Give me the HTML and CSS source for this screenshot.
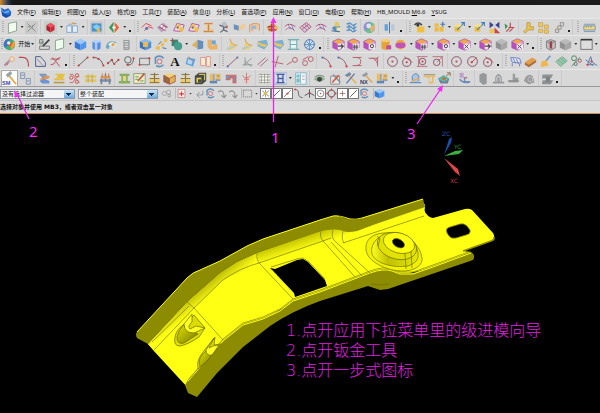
FILE: index.html
```html
<!DOCTYPE html>
<html lang="zh-CN">
<head>
<meta charset="utf-8">
<title>NX</title>
<link rel="stylesheet" href="styles.css">
</head>
<body>
<header class="titlebar"></header>
<nav class="menubar">
  <svg class="app-logo" viewBox="0 0 16 16"><path d="M1 2l5 3 5-2 4 5-1 5-6 3-5-3-1-5z" fill="#164fae"/><path d="M5 6l6-2 4 4-4 4-5-2z" fill="#2a7ce0"/><path d="M1 3l4 6M6 9l6-2" stroke="#b8dcff" fill="none"/></svg>
  <a href="#">文件(<u>F</u>)</a><a href="#">编辑(<u>E</u>)</a><a href="#">视图(<u>V</u>)</a><a href="#">插入(<u>S</u>)</a><a href="#">格式(<u>R</u>)</a><a href="#">工具(<u>T</u>)</a><a href="#">装配(<u>A</u>)</a><a href="#">信息(<u>I</u>)</a><a href="#">分析(<u>L</u>)</a><a href="#">首选项(<u>P</u>)</a><a href="#">应用(<u>N</u>)</a><a href="#">窗口(<u>O</u>)</a><a href="#">电极(<u>D</u>)</a><a href="#">帮助(<u>H</u>)</a><a href="#">HB_MOULD <u>M</u>6.6</a><a href="#"><u>Y</u>SUG</a>
</nav>
<div class="toolbars" id="toolbars"></div>
<div class="selection">
  <select class="filter" aria-label="类型过滤器"><option>没有选择过滤器</option></select>
  <select class="scope" aria-label="选择范围"><option>整个装配</option></select>
  <div class="snap" id="snap"></div>
</div>
<p class="status">选择对象并使用 MB3，或者双击某一对象</p>
<main class="viewport">
  <svg class="model" viewBox="0 114 600 299" preserveAspectRatio="xMidYMin meet">
    <defs>
      <linearGradient id="bend" gradientUnits="userSpaceOnUse" x1="200" y1="282" x2="212" y2="297"><stop offset="0" stop-color="#a5a500"/><stop offset="1" stop-color="#ffff16"/></linearGradient>
      <linearGradient id="bend2" gradientUnits="userSpaceOnUse" x1="320" y1="231" x2="324" y2="243"><stop offset="0" stop-color="#c4c400"/><stop offset="1" stop-color="#ffff16"/></linearGradient>
      <linearGradient id="cone" x1="0" y1="0" x2="1" y2="0"><stop offset="0" stop-color="#ffff20"/><stop offset=".35" stop-color="#c0c000"/><stop offset="1" stop-color="#e8e800"/></linearGradient>
      <linearGradient id="scoop" x1="0" y1="0" x2="1" y2="1"><stop offset="0" stop-color="#e4e400"/><stop offset="1" stop-color="#777700"/></linearGradient>
    </defs>
    <path fill="#ffff13" d="M148 344L187 302 220 273 237 262 257 253 320 231 425 204 424 210Q427 217 433 218L465 209Q469 208 472 210L493 233Q496 238 491 241L463 251 471 252 433 268 400 275 370 275 320 293 293 302 263 320 243 326 223 343 188 388 153 350Z"/>
    <path fill="url(#bend)" d="M148 344L187 302 220 273 237 262 257 253 259 263 223 280 194 308 154 350Z"/>
    <path fill="url(#bend2)" d="M257 253L322 231 337 229 343 231 357 231 425 206 424 216 343 243 331 239 259 263Z"/>
    <path fill="#8d8c00" d="M137 332L187 278Q193 272 200 270L220 261 247 246 263 239 320 220 333 216Q338 215 350 219 356 220 362 218L423 199 425 207 373 225 357 231Q347 233 343 231 337 228 322 231L257 253 237 262 220 273 187 302 148 344 137 338Q135 334 137 332Z"/>
    <path fill="#8d8c00" d="M188 380L223 340 243 324 263 318 280 310 293 300 320 291 370 272Q384 267 392 270L400 273 413 273 433 266 471 252Q476 255 473 260L388 289 380 290 368 286 320 301Q292 311 270 326L243 347 217 373 197 397 188 393 185 385Z"/>
    <path fill="none" stroke="#ffff18" d="M137 332L187 278Q193 272 200 270L220 261 247 246 263 239 320 220 333 216Q338 215 350 219 356 220 362 218L423 199M188 381L223 341 243 325 263 319 280 311 293 301 320 292 370 273Q384 268 392 271L400 274 413 274 433 267 471 253"/>
    <g fill="none" stroke="#686800" stroke-width=".6">
      <path d="M154 350L194 308 223 280 Q240 268 259 263L320 242 331 238M343 243L424 216M187 302L194 308 223 340M257 253Q256 260 260 264L293 299M321 231Q319 237 324 242L355 277M333 230Q330 238 337 243L370 273M343 231Q341 239 344 243M331 242L362 276M339 216L350 220 362 219M152 342L189 306M188 380L223 339 243 323 263 317 280 309 293 299 320 290 370 271Q384 266 392 269L400 272 413 272 433 265 471 251M371 284Q379 286 389 284"/>
    </g>
    <path fill="#000" d="M270 268L275 269 297 260 303 259 308 262 325 280 327 286 295 297 294 293 273 271Z"/>
    <path fill="none" stroke="#d9d900" stroke-dasharray="1 1" d="M272 270L294 294"/>
    <path fill="none" stroke="#777700" stroke-width=".7" d="M271 267L297 259 303 258 309 262 325 279"/>
    <g stroke="#676700" stroke-width=".65">
      <path fill="#f1f100" d="M389 233C374 232 365 239 366 249 366 261 387 272 405 271 417 270 423 264 422 258 420 246 412 238 398 234Z"/>
      <path fill="url(#cone)" d="M378 238Q370 245 372 254C376 264 393 268 408 266Q420 262 418 253C416 238 400 231 390 233Z"/>
      <ellipse cx="397" cy="246" rx="20" ry="13" transform="rotate(16 397 246)" fill="#e2e200"/>
      <ellipse cx="399" cy="243" rx="16" ry="10" transform="rotate(16 399 243)" fill="#ffff12"/>
      <ellipse cx="398.500" cy="243" rx="6.500" ry="4" transform="rotate(28 398 243)" fill="#000"/>
      <path fill="none" d="M377 236L380 239 378 246M405 253L406 269M411 251L412 268"/>
    </g>
    <path fill="#000" stroke="#8d8c00" stroke-width=".8" d="M447 233Q445 228 450 227L460 224Q464 223 467 226L470 230Q471 234 466 235L456 238Q451 239 449 236Z"/>
    <path d="M494 237Q495 240 491 241L463 251" fill="none" stroke="#8c8c00" stroke-width="1.500"/>
    <g stroke="#626200" stroke-width=".65">
      <path fill="#dcdc00" d="M175 337Q173 346 180 346 187 345 199 337L205 328 194 315 187 322Q176 329 175 337Z"/>
      <path fill="url(#scoop)" d="M177 337Q177 345 184 343L198 334 194 332Q184 331 184 324 178 331 177 337Z"/>
      <path fill="#ffff24" d="M184 324Q184 333 194 333L205 328 196 326 190 329Q187 326 192 322L192 314Z"/>
      <path fill="#dcdc00" d="M198 368Q196 361 203 352L215 337 214 345 221 344 208 360 198 369Z"/>
      <path fill="url(#scoop)" d="M200 367Q197 358 206 351L212 354 208 360Z"/>
      <path fill="#ffff24" d="M206 350Q206 356 212 355L219 345 213 346 209 348 214 338Z"/>
    </g>
    <path fill="#174ea6" d="M444 155L449 139 452 137 451 143Z"/><path fill="#3bb143" d="M444 156L455 151 463 150 459 154Z"/><path fill="#df4646" d="M444 158L458 169 460 176 455 172Z"/>
    <g class="axis"><text x="442" y="136" fill="#2454b4">ZC</text><text x="454" y="149" fill="#328b38">YC</text><text x="450" y="183" fill="#bd3636">XC</text></g>
  </svg>
  <ol class="notes">
    <li>1.点开应用下拉菜单里的级进模向导</li>
    <li>2.点开钣金工具</li>
    <li>3.点开一步式图标</li>
  </ol>
</main>
<svg class="callouts" viewBox="0 0 600 413" preserveAspectRatio="xMidYMin meet">
  <path d="M273.500 22V122M18 96L29 119M440 90L417 124" fill="none" stroke="#e826e8" stroke-width="1.300"/>
  <path d="M273.500 17l3 6h-6zM14 90l5 5-4 3zM443 85l-1 7-5-3z" fill="#f52cf5"/>
  <text x="271" y="143">1</text><text x="29" y="137">2</text><text x="407" y="139">3</text>
</svg>
<script src="toolbars.js"></script>
</body>
</html>
```
FILE: styles.css
```css
* { box-sizing: border-box; }
body {
  margin: 0;
  min-height: 100vh;
  display: flex;
  flex-direction: column;
  background: #000;
  color: #111;
  font: 6px/8px "Liberation Sans", "Noto Sans CJK SC", sans-serif;
  position: relative;
  overflow-x: hidden;
}
.titlebar { height: 5px; background: linear-gradient(90deg, #d48a24 0, #263c58 8px, #171717 12px, #1c1c1c); }
.menubar {
  display: flex;
  align-items: center;
  gap: 6px;
  height: 13px;
  background: #dfdfdf;
  font-family: "Noto Sans", "Noto Sans CJK SC", sans-serif;
  white-space: nowrap;
}
.menubar a { color: #111; text-decoration: none; }
.app-logo { width: 12px; height: 12px; margin-right: -1px; }
.toolbars { background: #d8d8d8; border-bottom: 1px solid #999; }
.bar { display: flex; height: 17px; border-top: 1px solid #e8e8e8; }
.group {
  display: flex;
  align-items: center;
  justify-content: space-evenly;
  min-width: 0;
  border-right: 1px solid #cacaca;
}
.group:last-child { border-right: 0; }
button {
  display: block;
  padding: 0;
  border: 0;
  background: none;
  width: 13px;
  height: 13px;
  flex: none;
  font: inherit;
  color: inherit;
}
button svg { display: block; width: 100%; height: 100%; opacity: .88; }
.icon-text { font: bold 13px/13px "Liberation Serif", serif; }
.pressed { width: 15px; height: 15px; background: #fff; outline: 1px solid #aaa; }
.start { width: auto; display: flex; align-items: center; gap: 2px; }
.start svg { width: 13px; height: 13px; opacity: 1; }
.drop { width: 3px; height: 2px; flex: none; background: #333; clip-path: polygon(0 0, 100% 0, 50% 100%); }
.more { width: 2px; height: 2px; flex: none; margin-top: 8px; background: #222; }
.grip { width: 2px; height: 12px; flex: none; background: repeating-linear-gradient(#b2b2b2 0 1px, transparent 1px 2px); }
.selection { display: flex; align-items: center; gap: 3px; height: 13px; background: #d8d8d8; }
select {
  appearance: none;
  height: 10px;
  border: 1px solid #8d9aab;
  border-radius: 0;
  padding: 0 12px 0 1px;
  color: #111;
  font: 6px/8px "Noto Sans CJK SC", sans-serif;
  background:
    linear-gradient(#112b4c, #112b4c) right 3px top 3px / 5px 1px no-repeat,
    linear-gradient(#112b4c, #112b4c) right 4px top 4px / 3px 1px no-repeat,
    linear-gradient(#112b4c, #112b4c) right 5px top 5px / 1px 1px no-repeat,
    linear-gradient(#cbe6fa, #6fa8dc) right / 10px 100% no-repeat,
    #f5f5f5;
}
.filter { width: 75px; }
.scope { width: 80px; }
.snap { display: flex; align-items: center; }
.snap button { width: 11px; height: 11px; }
.snap .drop { margin: 0 2px; }
.snap .boxed { background: #fff; border: 1px solid #777; }
.gap { width: 4px; height: 11px; border-right: 1px solid #bbb; }
.status {
  margin: 0;
  height: 14px;
  padding-top: 2px;
  background: #dcdcdc;
  border-top: 1px solid #c6c6c6;
  border-bottom: 1px solid #c98c58;
  font-family: "DejaVu Sans", "Noto Sans CJK SC", sans-serif;
  font-weight: bold;
}
.viewport { position: relative; flex: 1; }
.model { display: block; width: 100%; }
.axis { font: 6px "DejaVu Sans", sans-serif; }
.notes {
  position: absolute;
  left: 286px;
  top: 207px;
  margin: 0;
  padding: 0;
  list-style: none;
  color: #e41fe4;
  font: 300 16px/20px "DejaVu Sans", "Noto Sans CJK SC", sans-serif;
  white-space: nowrap;
}
.callouts { position: absolute; top: 0; left: 0; width: 100%; pointer-events: none; }
.callouts text { fill: #f52cf5; font: 15px "Noto Sans", sans-serif; }
```
FILE: toolbars.js
```js
// Icon drawings, each on a 16 x 16 grid.
const line = (d, c = '#a5343c', w = 1.2) => `<path d="${d}" fill="none" stroke="${c}" stroke-width="${w}"/>`;
const fill = (d, c) => `<path d="${d}" fill="${c}"/>`;
const dot = (x, y, c = '#c22', r = 1.3) => `<circle cx="${x}" cy="${y}" r="${r}" fill="${c}"/>`;
const cube = (a, b, c) => fill('M1 4l7-3 7 3-7 4z', a) + fill('M1 4l7 4v7l-7-3z', b) + fill('M15 4l-7 4v7l7-3z', c);
const ring = (x, y, r, c = '#87405e') => `<circle cx="${x}" cy="${y}" r="${r}" fill="none" stroke="${c}" stroke-width="1.2"/>`;
const pinkCube = cube('#f4a03a', '#b93bc0', '#e58ae0') + line('M1 4l7-3 7 3v8l-7 3-7-3zM8 8v7', '#a03aa0', .8) + fill('M7 7h8v7H7z', '#f4ecf4');
const sheet = (c) => fill('M1 8l8-6 6 5-8 7z', c);

const icons = {
  plane: fill('M3 3l10-2v11l-10 3z', '#f4fff1') + line('M3 3l10-2v11l-10 3z', '#6f9275', 1),
  cut: '<path d="M0 0h16v16H0z" fill="#cacaca"/>' + line('M3 3l10 10M13 3L3 13M3 7h4M9 5v4', '#777', 1),
  redcube: '<path d="M0 0h16v16H0z" fill="#c5cfc9"/>' + fill('M3 5l5-3 5 3-5 3z', '#ef4050') + fill('M3 5l5 3v6l-5-3z', '#a80818') + fill('M13 5l-5 3v6l5-3z', '#d01022'),
  assy: fill('M1 6h6v8H1zM8 6h6v8H8z', '#e4f1fb') + line('M1 6h6v8H1zM8 6h6v8H8zM3 4h4M9 3h4', '#6b9ac4', 1) + fill('M7 2h4v2H7z', '#e99635'),
  views: '<path d="M0 0h16v16H0z" fill="#c4ccd2"/>' + fill('M2 3h12v10H2z', '#3887c6') + fill('M3 7l5-3 5 3-4 5z', '#79cbf0') + fill('M9 9h3v5H9z', '#f1b928'),
  cycle: fill('M8 0l7 8-7 8-7-8z', '#f0f0ed') + fill('M1 8l6-7v4L5 8l2 3v4z', '#22934a') + fill('M8 1l6 7-6 7v-5l2-2-2-2z', '#e8572c'),
  strip: fill('M1 7l5-4 9 2-4 8z', '#f0d0d2') + line('M1 8l5-5 7 3M4 12l5-5 6 2', '#c4454c') + dot(7, 9, '#4b71bc', 2),
  blank: sheet('#b896bd') + line('M3 7l9 5M6 4l8 4', '#b43d56') + dot(7, 6, '#fff') + dot(10, 9, '#fff'),
  nest: fill('M1 12l4-9 10 2-3 9z', '#f0d9ea') + line('M2 12l4-9 9 2-3 8z', '#ab49a0') + fill('M4 7l4-4 3 3-4 4zM8 11l3-4 4 3-4 4z', '#f0bf35') + dot(7, 8, '#51519d'),
  zbend: fill('M3 2h10v3h-3v5h4v4H2v-3h4V5H3z', '#f2bd68') + line('M3 3h10M8 4v8M2 13h12', '#c2673d', 1),
  robot: dot(9, 4, '#b4bcc8', 3) + line('M8 7v4l-4 3M8 9l5-3M8 11l5 2M3 5l5 2', '#505c66', 1.5) + dot(12, 8, '#d95947'),
  flange: fill('M1 4l7 2v6l-7-2z', '#5888c0') + fill('M7 6l8-3v6l-8 3z', '#f2cb8b'),
  curve: fill('M2 5q5-4 11-2v9q-2-4-4-1l-5 3z', '#f0c39a') + fill('M4 7q4-3 6 0v3q-3-2-6 2z', '#8cb4d9') + line('M2 14V5q5-4 12-1v8', '#d58a49', 1),
  diewiz: fill('M1 8l7-6 7 6-4 5H4z', '#ec8b28') + line('M2 7h11M3 11h10M7 3v10', '#a22e29', 1.5) + dot(12, 8, '#e7ce2d', 2),
  band: fill('M1 7q5-6 13 0l-2 5q-5-5-9 0z', '#e0e5f6') + line('M1 7q5-6 13 0M2 11q5-6 11 1', '#c33e51') + line('M5 4l3 6M9 4l3 7', '#5867a4', 1),
  grid: sheet('#c9cdea') + line('M1 8l8-6 6 5-8 7zM4 6l6 5M7 4l6 5M4 10l8-6', '#b63558', 1),
  tool: fill('M2 9l6-5 5 3-6 6z', '#4e83b9') + fill('M6 1h5v6H6z', '#e5c653') + fill('M8 8h5v4H8z', '#f3e7a4') + line('M2 12l10 1', '#31619a', 1.5),
  spring: line('M2 4q4-3 6 0t6-1M2 8q4-3 6 0t6-1M2 12q4-3 6 0t6-1M5 4v8M11 4v8', '#4186c0', 1.5),
  globe: '<circle cx="8" cy="8" r="7" fill="#3dac75"/>' + fill('M8 1A7 7 0 0 0 2 12l6-4z', '#3c77cb') + fill('M8 8l6-4q3 6-4 10z', '#e9a32a') + fill('M2 2l4 6 6-3-3 6z', '#e8503a') + dot(7, 6, '#eef4f8', 2),
  sphere: '<circle cx="8" cy="8" r="7" fill="#58bd89"/>' + fill('M8 1A7 7 0 0 0 2 12l6-4z', '#8f82d6') + fill('M8 8l6-4q3 6-4 10z', '#e9aa6a') + dot(7, 6, '#dce9f4', 3),
  mirror: line('M8 1v14', '#46648d') + fill('M2 4h4v8H2z', '#5298d8') + fill('M10 4h4v8h-4z', '#b5c5d9'),
  eye: fill('M5 7h9v7H5z', '#f4bc29') + line('M2 5q4-5 9 0', '#343434', 2) + dot(6, 5, '#222', 2),
  add: fill('M2 8h5v5H2zM8 7h5v6H8zM2 3h5v4H2z', '#f1b724') + line('M12 1v6M9 4h6', '#356fba', 1.5),
  move: fill('M2 7h7v6H2z', '#f1bb25') + line('M5 11l9-9M10 2h4v4', '#2770c0', 1.3) + fill('M2 7l2-3h7L9 7z', '#ffe071'),
  mate: fill('M2 1l5 4-5 4zM14 1L9 5l5 4z', '#252a88') + fill('M2 10h5v5H2z', '#f3c32e') + fill('M8 8l7 7H8z', '#c93334'),
  constrain: fill('M2 3l4 3-3 4z', '#248a41') + line('M9 2v6M7 8h7M4 13l4-4M8 13l4-4', '#b92e3b', 1.4),
  keys: fill('M6 2h4v5h4v4H8l-4 4-2-2 4-4z', '#efc13b') + line('M6 2h4v5h4v4H8l-4 4-2-2 4-4z', '#a98226', .8),
  comp: fill('M2 2h5v5H2zM9 5h5v4H9zM2 10h5v4H2zM9 11h5v4H9z', '#f3c949') + line('M2 2h5v5H2zM9 5h5v4H9zM2 10h5v4H2zM9 11h5v4H9z', '#c08a2a', .7),
  chain: line('M3 10h4v4H3zM6 6h4v4H6zM9 2h4v4H9z', '#868b8d', 1.2) + dot(6, 9, '#dca736'),
  ruler: fill('M1 6h14v5H1z', '#f5da71') + line('M1 6h14v5H1zM4 6v2M7 6v2M10 6v2M1 13h14M1 4h14', '#426caa', .8),
  sketch: line('M2 2h4v5H2zM2 10h12v4H2z', '#717171') + line('M6 10L14 2', '#303030', 2) + line('M3 5h4', '#348b52'),
  box: cube('#94c6ff', '#246cd2', '#3d8df2'),
  cyl: fill('M3 4v9q5 4 10 0V4z', '#4283e7') + fill('M6 4h3v11H6z', '#a8c9ff') + '<ellipse cx="8" cy="4" rx="5" ry="2" fill="#aed0ff"/>',
  sweep: fill('M1 12q1-11 13-7l-3 5q-5-3-7 4z', '#5ba5c5') + fill('M4 8q5-6 10 0l-3 4q-2-4-5-2z', '#f2f5df') + dot(10, 8, '#e69d35', 2),
  thread: line('M5 3h6M4 6h8M4 9h8M4 12h8M5 14h6M5 2v12M11 2v12', '#8d9396', 1.3),
  feature: cube('#80b8ef', '#2468b9', '#3987da') + fill('M5 5h6v6H5z', '#f2b443'),
  pattern: fill('M1 10h5v4H1zM7 6h4v4H7zM11 1h4v4h-4z', '#edbb34') + line('M4 8l4-4M9 12l5 1', '#37679a'),
  unite: fill('M2 2h8v8H2z', '#247a69') + dot(10, 10, '#329681', 5) + line('M0 3h5M3 0v5', '#8e392d', 1),
  trim: fill('M1 9l7-7v11z', '#e5ab42') + fill('M8 2l7 2v9l-7 1z', '#5384bb'),
  blend: fill('M2 2h5v8l7-3v7H5l-3-3z', '#efad53') + fill('M7 3h5v5H7z', '#5c9dde'),
  surf: fill('M6 1q3 8 9 8-2 6-13 6 6-5 4-14z', '#f8cc55') + fill('M2 12q6-1 12-4-3 5-11 6z', '#a3c9e2') + line('M6 1q2 8 9 8', '#d58a38', 1),
  surf2: fill('M2 4l11-2 2 6-5 6-8-4z', '#6fabd5') + fill('M2 4q5 4 12 4l-3 3q-6-1-9-4z', '#efc449'),
  mesh: fill('M4 4h8v8H4z', '#e8fbfa') + line('M1 2h14M1 14h14M4 2v12M12 2v12M4 8h8', '#64aeb1', 1.3),
  ball: '<circle cx="8" cy="8" r="6" fill="#c9def2"/>' + ring(8, 8, 6, '#3267a8') + line('M8 1v14M1 8h14M4 4l8 8M12 4l-8 8', '#4778aa', .9),
  pinkArrow: pinkCube + line('M7 10h7M11 8l3 2-3 3', '#333', 1.3),
  pinkGrid: pinkCube + line('M9 8v6M12 8v6M7 10h7M7 12h7', '#343434', 1),
  pinkHole: pinkCube + ring(11, 10, 2, '#333'),
  pinkMove: pinkCube + line('M8 8l5 5M13 8l-5 5', '#444', 1.2),
  orangeCyl: fill('M3 3v10q5 3 10 0V3z', '#e89c27') + '<ellipse cx="8" cy="3" rx="5" ry="2" fill="#f8cc65"/>' + fill('M9 9h6v5H9z', '#bd3c95'),
  pill: '<circle cx="8" cy="8" r="6" fill="#efa131"/>' + fill('M2 7q6-3 12 0v4q-6 3-12 0z', '#c040b0'),
  graycube: cube('#b8b8b8', '#898989', '#a0a0a0'),
  wirebox: fill('M3 4l5-2 6 2v8l-6 3-5-3z', '#bbb') + line('M3 4l5-2 6 2v8l-6 3-5-3zM3 4l5 3 6-3', '#686868', 1) + fill('M7 4h3v9H7z', '#a32838'),
  screen: '<path d="M1 2h14v12H1z" fill="#dedede" stroke="#555"/>' + line('M1 2h14', '#222', 2),
  key: line('M2 13l8-8', '#a28aae', 3) + fill('M8 1h6v7H8z', '#f4dfc5') + ring(11, 5, 3, '#dca86d') + dot(5, 11, '#db6a4a'),
  fillet: line('M1 3h5q7 0 7 11', '#ba3940', 1.5),
  chamfer: line('M2 2v12h12V9L8 2H2z', '#3d4e83') + line('M4 5l7 8', '#8d7bb3'),
  offset: line('M2 12q5 0 6-4t6-5M2 5h11M4 3q5 5 9 11', '#b3434b'),
  line: line('M2 13L13 3', '#555') + dot(2, 13) + dot(13, 3),
  arc: line('M2 3q9 0 12 10', '#555') + dot(2, 3) + dot(8, 5) + dot(14, 13),
  spline: line('M1 10q4-2 5-5 2 8 4 5t5-4', '#555') + dot(1, 10) + dot(6, 6) + dot(9, 11) + dot(14, 6),
  circles: ring(6, 6, 4, '#555') + line('M4 12q8 2 9-7', '#555') + dot(13, 4) + dot(6, 12),
  rect: line('M2 4h12v8H2z', '#666') + dot(2, 12) + dot(14, 4),
  orbit: ring(8, 8, 3, '#cc5b65') + line('M2 4q6-5 11 0M4 13q5 3 9-1M3 4v7', '#4f89ba', 2),
  project: fill('M4 3l10 2-3 9-9-3z', '#479ce1') + fill('M5 5l6 2-2 5-5-2z', '#b5d5f5') + line('M6 2l5 6', '#d16c5d'),
  fold: fill('M2 3h6v10H2zM9 2h5v12H9z', '#faf1cf') + line('M2 3h6v10H2zM9 2h5v12H9z', '#e58a8e'),
  purple: line('M2 14L14 3', '#98506b') + dot(2, 14, '#4c61a6') + dot(14, 3, '#4c61a6'),
  perp: line('M2 12h12M5 13V3M5 11l8-7M5 8l8 6', '#7a8585', 1),
  parallel: line('M2 12L12 3M5 14l10-9', '#a46276'),
  cross: line('M1 8l14 3M9 1L5 15', '#b45363'),
  tangent: line('M1 12l7-4', '#b45363') + ring(11, 6, 3, '#b45363'),
  tangent2: ring(5, 10, 3, '#b45363') + ring(12, 5, 3, '#b45363') + line('M2 6l7-4', '#b45363'),
  arc2: line('M3 3q8 2 10 11', '#9b4961') + dot(3, 3, '#4356a1') + dot(13, 14),
  corner: line('M2 3h11M2 13h11M6 3q6 0 6 5t-6 5', '#b45363'),
  corner2: line('M2 4h11v10M5 4q6 0 8 7M10 7l4-5', '#b45363'),
  circle: ring(8, 8, 6) + dot(8, 8, '#b33'),
  circleT: ring(7, 9, 5) + line('M4 2l10 7', '#b45363') + dot(7, 9, '#b33'),
  circleBox: ring(8, 8, 4) + line('M1 2h13M1 14h13M3 2v12', '#b45363', 1) + dot(8, 8, '#b33'),
  circleLine: ring(7, 9, 4) + line('M2 2h12v12M7 9l7-7', '#b45363', 1),
  circleR: ring(8, 8, 6) + line('M7 9l6-6', '#b33') + dot(7, 9),
  table: fill('M2 3l11 1 2 6-11-1z', '#dfe5f6') + line('M2 3l11 1 2 6-11-1zM4 10v4M13 11v3M5 4l3 6M9 5l3 6', '#4d68ba', 1),
  brick: fill('M1 9l9-6 5 3-9 7z', '#e79436') + fill('M1 9l5 3v3l-5-3zM6 12l9-6v3l-9 6z', '#a66125'),
  broom: line('M14 1L8 8', '#6a8ecf', 2) + fill('M3 8l6-2 3 7-10 2z', '#f3b13c'),
  green: sheet('#8fc8a5') + line('M1 8l8-6 6 5-8 7zM4 6l6 5M7 4l6 5', '#4b9372', .8),
  nodes: ring(5, 4, 3, '#397b52') + ring(12, 7, 2, '#a44a59') + ring(7, 11, 2, '#5c6964') + line('M2 14L12 3', '#446c55', 1),
  vectors: line('M3 12L7 2l2 7 6 4M3 12h8M1 6l9 7', '#466ca9') + dot(8, 8) + dot(3, 12),
  hammer: line('M6 3l9 11', '#e4a42e', 2) + fill('M4 4l5-4 2 3-5 4z', '#8b989b') + '<text x="0" y="15" font-size="6" font-weight="bold" fill="#242f99">SM</text>',
  docs: line('M2 1h5v7H2zM9 8h5v7H9z', '#7890b8') + line('M3 4h3M10 11h3', '#7186a5'),
  zblue: fill('M1 2h9l1 3-4 3 7 3v3H5l-3-3 4-3z', '#5d8cd5') + line('M5 5l9 1M3 9l10-2', '#df8841', 2),
  steps: fill('M3 2h12l-3 6h2v2H1V8h3l2-4H3z', '#e7bd36') + fill('M1 12h13v2H1z', '#b69431'),
  relief: line('M2 3h4l3 5 5-3M2 13h4l3-5 5 5', '#c34748', 1) + ring(4, 7, 2, '#ca4747') + ring(11, 4, 2, '#ca4747') + ring(11, 12, 2, '#ca4747'),
  yellow: fill('M1 4h14v3H1zM1 9h14v3H1z', '#e3c545') + line('M5 3v10M10 3v10', '#b49442', 1),
  press: fill('M1 9h14v3H1z', '#7387a8') + line('M3 8v7M8 3v9M13 8v7', '#62758f', 2) + fill('M2 5h12v3H2z', '#dc8a3c') + line('M4 2v4M8 1v4M12 2v4', '#b9562e', 1),
  post: fill('M2 2h12v3h-2v6h3v3H1v-3h3V5H2z', '#7fa950') + fill('M6 5h4v6H6z', '#e8d678'),
  edit: fill('M1 2h14v12H1z', '#f4efb8') + line('M1 2h14v12H1z', '#667f65', .9) + line('M6 11l8-9', '#b5493f', 2) + line('M3 6h4M3 9h3M9 11h4', '#42925d'),
  punch: fill('M6 2h4v5H6zM2 8h12v6H2z', '#f2c758') + line('M8 1v12M3 3h10M2 8h12M2 13h12', '#716647', 1.2),
  goldcube: cube('#f4d36a', '#8a5a2b', '#e0b341') + line('M1 4l7 4 7-4v8l-7 3-7-3V4M8 8v7', '#a33a2c', 1),
  mold: fill('M1 5l5-4h9v10l-5 4H1z', '#33352f') + fill('M3 7h6v6H3z', '#e8cf4a') + fill('M5 9h4v4H5z', '#33352f') + line('M6 3h7v7', '#d2b840', 1.5),
  tank: fill('M1 2h4v9H1zM8 2h6v8H8z', '#efb84b') + fill('M1 11h9v3H1z', '#4e7db8') + line('M6 2v9M8 10h6M10 5h3', '#5d7fb5', 1.3),
  wave: fill('M1 4h13v9h-4V8H6v2H1z', '#6e8bc5') + line('M1 4h12v8M1 9h5V6h4v7h4', '#d65844', 1.5),
  pot: fill('M4 6h8l-2 8H6z', '#efc2bd') + line('M3 4l3 3h4l3-3M5 9h6M8 1v13', '#c9605c', 1),
  hash: fill('M2 2h12v12H2z', '#fffef0') + line('M1 3h14M1 13h14M1 6h14M1 10h14M4 2v12M8 2v12M12 2v12', '#80837b', .9),
  ibeam: '<path d="M0 1h16v14H0z" fill="#d3dff2" stroke="#8ba9d2"/>' + line('M3 3h10M3 13h10M5 3v10M11 3v10M5 8h6', '#344d93', 1.6),
  list: fill('M2 1h13v14H2z', '#effbff') + line('M2 1h13v14H2zM8 2v12', '#6fa9c2', 1) + fill('M3 3h4v4H3z', '#67c6d9') + fill('M3 8h4v5H3z', '#70b8b5') + line('M10 5h3M10 9h3', '#c87f70', 1),
  look: fill('M1 9q7-8 14 0-7 6-14 0z', '#8ba886') + dot(8, 9, '#26352b', 3) + line('M2 6q6-4 12 0', '#596f58', 1),
  wrench: fill('M2 5h11v10H2z', '#e8e4e0') + line('M2 5h11v10H2z', '#777', 1) + line('M5 3l9 10', '#7f8d98', 2) + line('M12 4L4 13', '#c44b32', 2),
  cutters: line('M5 3l10 11', '#e9b150', 2) + line('M13 2L3 14', '#4e6eaa', 1.6) + fill('M1 4l6-4 2 3-5 3z', '#627da5'),
  nx: line('M6 3l9 10', '#e6a33b', 2) + fill('M2 4l6-4 2 3-5 3z', '#8998a4') + '<text x="0" y="15" font-size="7" font-weight="bold" fill="#26284f">NX</text>',
  bluecap: fill('M4 11V5q5-6 8 0v6l3 3H1z', '#a5c5e6') + line('M4 11V5q5-6 8 0v6M1 13h14', '#4e80bd') + line('M4 11l8-3', '#f0a93d', 2),
  yellowcap: fill('M1 3h14v3h-2v8H7V7L1 6z', '#edb653') + fill('M8 6h3v6H8z', '#d8d8d8') + line('M1 3h14', '#6d8fb8', 1),
  rainbow: fill('M0 8l7-4 7 4-2 6H3z', '#67788a') + fill('M0 8l7-4 7 4-7 4z', '#49b8e3') + fill('M2 8l5-3 5 3-5 3z', '#46c257') + fill('M5 8l2-2 3 2-3 2z', '#e7462b') + line('M10 5l5-4M11 1h4v4', '#8b6435', 1.2),
  unform: fill('M2 1h5v6H2z', '#bc9ac8') + line('M2 9q5 6 13 3M8 6v6h6', '#5e83b8', 1.7) + dot(10, 7, '#df5961'),
  gray: fill('M3 3l5-2 4 2v11l-4 2-5-4z', '#8e9193'),
  graycap: fill('M1 12h3V6q4-7 8 0v6h3v2H1z', '#909395') + line('M6 12V7q2-3 4 0v5', '#d0d1d1', 1.3),
  gray3: fill('M2 10h5V2h3v5h4v6H2z', '#929596') + line('M1 11h14', '#777', 1),
  grayleaf: fill('M1 11Q5 0 12 5l2 8-7 2z', '#929596') + ring(9, 9, 3, '#bbb'),
  mass: fill('M2 3h13l-3 5H1zM2 10h13l-3 5H1z', '#84898b') + fill('M6 6h5v6H6z', '#6f7678'),
  plus: '<path d="M3 2h10v12H3z" fill="#f7eeee" stroke="#b66"/>' + line('M8 5v7M4.500 8.500h7', '#c33', 1.7),
  back: line('M13 4v6H5M8 6L4 10l4 4', '#89939e', 1.4),
  hook: line('M3 6q8-6 9 8M8 11l4 3 3-4', '#858989', 1.6),
  dashed: '<path d="M2 3h12v10H2z" fill="none" stroke="#555" stroke-dasharray="2 1"/>',
  star: line('M2 3l12 10M14 3L2 13M8 2v12', '#333') + dot(8, 8, '#dfb92c', 3),
  mid: line('M2 14L14 2', '#333') + dot(8, 8, '#c33', 2),
  slash: line('M2 14L14 2', '#333', 1.5),
  snapcurve: line('M3 2q5 0 5 6t6 6', '#444') + dot(3, 2),
  intersect: line('M1 11l7-4 7 4M8 2v12', '#444', 1.4) + dot(8, 7),
  snapCircle: ring(8, 8, 6, '#444') + dot(8, 8),
  quad: ring(8, 8, 5, '#444') + dot(8, 2) + dot(8, 14) + dot(2, 8) + dot(14, 8),
  point: line('M8 3v10M3 8h10', '#844', 1.3),
  gears: ring(5, 8, 3, '#999') + ring(11, 6, 3, '#999') + ring(12, 11, 2, '#888')
};

const svg = (name) => `<svg viewBox="0 0 16 16" aria-hidden="true">${icons[name]}</svg>`;

// "," is a drop-down mark, "." the end-of-bar mark, ":" a drag handle,
// a leading "!" a pressed or boxed button.
function item(token, boxedClass) {
  if (token === ',') return '<span class="drop"></span>';
  if (token === '.') return '<span class="more"></span>';
  if (token === ':') return '<span class="grip"></span>';
  if (token === '|') return '<span class="gap"></span>';
  if (token === 'start') return `<button class="start">${svg('globe')}开始</button>`;
  if (token === 'A') return '<button class="icon-text">A</button>';
  const boxed = token[0] === '!';
  return `<button${boxed ? ` class="${boxedClass}"` : ''}>${svg(boxed ? token.slice(1) : token)}</button>`;
}

// Each group: its share of the bar, then its contents.
const bars = [
  [[41, ': plane , cut'], [47, 'redcube , assy ,'], [16, 'views'], [29, 'cycle , .'],
   [131, ': strip blank nest nest zbend robot flange curve'], [17, 'diewiz'], [80, 'band grid band tool spring'],
   [17, 'sphere'], [27, 'mirror .'], [114, ': eye , add , move , move mate constrain'], [54, 'keys comp chain .'], [27, ': ruler']],
  [[35, ': start ,'], [101, 'sketch plane , box cyl sweep thread'], [85, 'feature pattern unite , trim blend'],
   [102, 'surf surf surf2 surf2 mesh ball .'],
   [214, ': pinkArrow pinkGrid pinkHole orangeCyl pill , pinkGrid , pinkHole , pinkMove , pinkArrow graycube pinkMove , .'],
   [63, ': wirebox graycube , screen ,']],
  [[70, 'key fillet chamfer offset .'], [150, ': line arc spline circles rect orbit A project fold .'],
   [97, ': purple perp parallel cross tangent tangent2'], [67, 'arc2 arc2 corner corner2'],
   [63, 'circle circleT circleBox circleLine'], [55, 'circle circleR circleT .'],
   [98, ': table brick broom green nodes vectors']],
  [[35, '!hammer docs'], [80, 'zblue steps relief yellow press'], [142, 'post edit punch goldcube punch mold tank wave pot'],
   [54, 'hash ibeam , list'], [93, 'look wrench cutters nx tank , .'], [51, ': bluecap yellowcap rainbow'],
   [20, 'unform'], [64, 'gray graycap gray3 grayleaf'], [22, 'mass .'], [39, '']]
];

document.getElementById('toolbars').innerHTML = bars.map((groups) =>
  `<div class="bar">${groups.map(([share, contents]) =>
    `<div class="group" style="flex: ${share} 1 0">${contents.split(' ').filter(Boolean).map((t) => item(t, 'pressed')).join('')}</div>`
  ).join('')}</div>`).join('');

document.getElementById('snap').innerHTML =
  'gears | plus , back orbit hook hook | dashed , !star !slash !mid snapcurve intersect !snapCircle quad !point !slash orbit | box'
    .split(' ').map((t) => item(t, 'boxed')).join('');
```
